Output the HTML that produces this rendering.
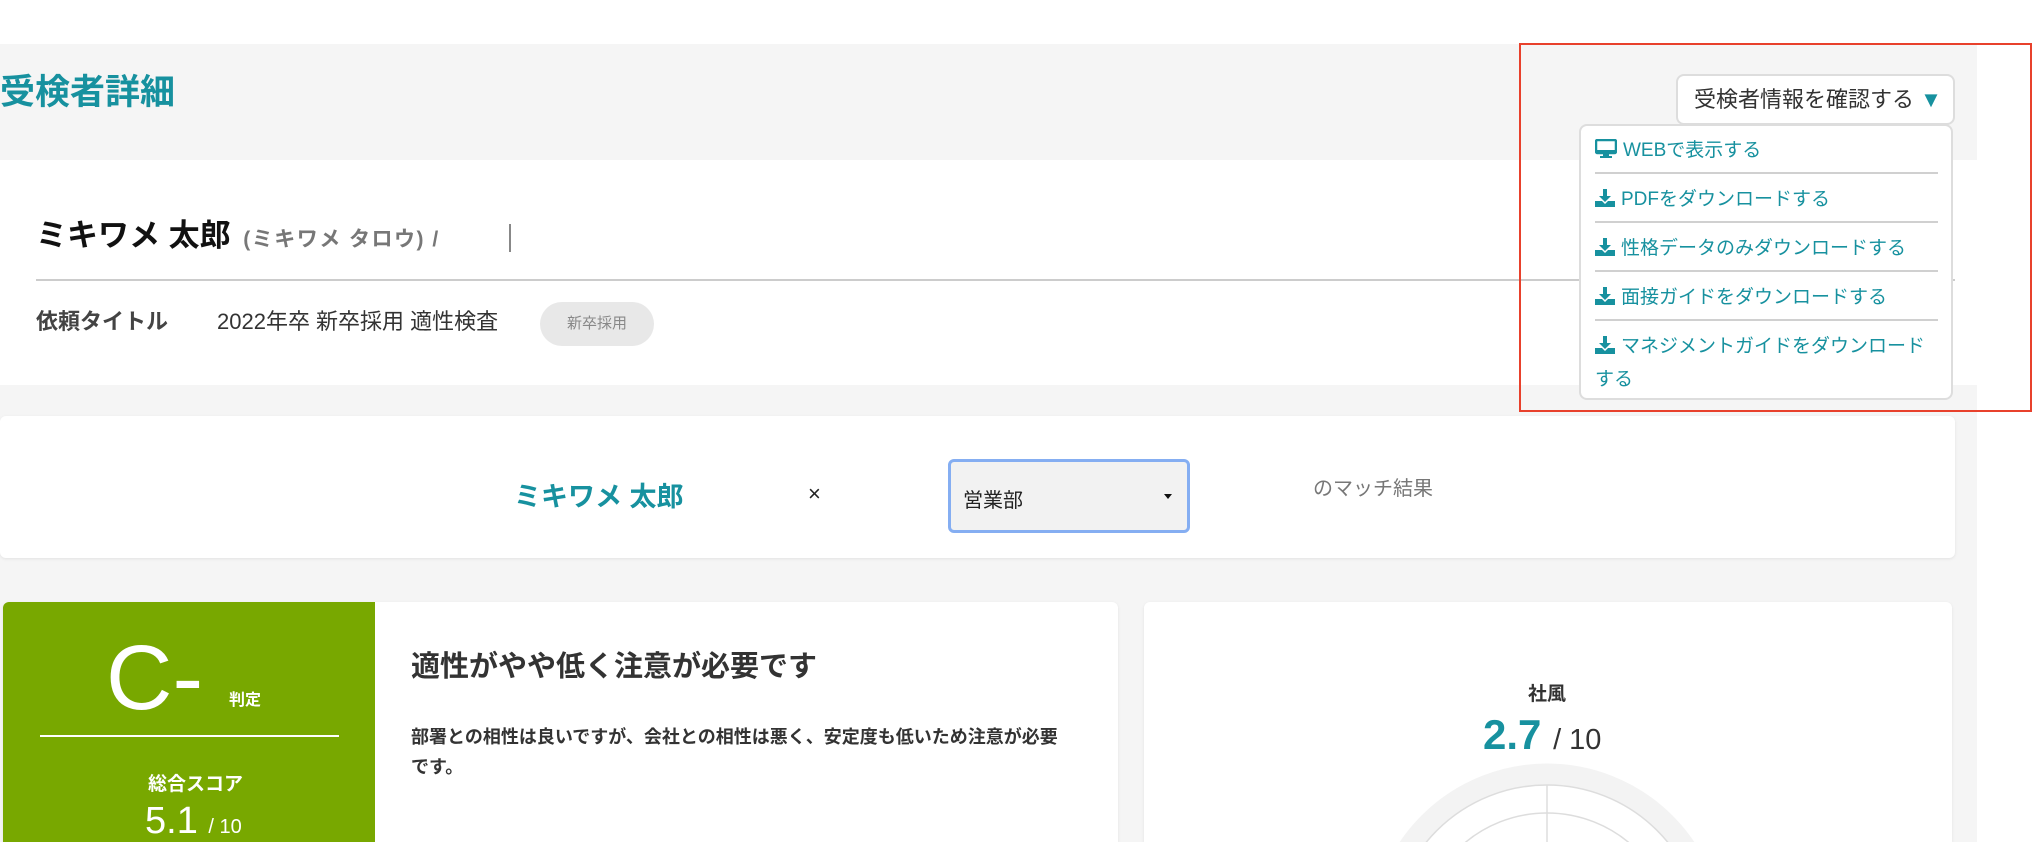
<!DOCTYPE html>
<html><head><meta charset="utf-8"><style>
*{box-sizing:border-box;margin:0;padding:0}
html,body{width:2034px;height:842px;overflow:hidden}
body{background:#fff;font-family:"Liberation Sans","Noto Sans CJK JP",sans-serif;position:relative}
#w{position:absolute;left:0;top:0;width:2034px;height:842px;overflow:hidden}
.abs{position:absolute}
.teal{color:#17919f}
.dd a{position:absolute;left:14px;color:#17919f;font-size:19px;white-space:nowrap;display:flex;align-items:center}
.sep{position:absolute;left:14px;width:343px;height:2px;background:#d0d0d0}
.ic{display:inline-block;margin-right:6px}
</style></head><body><div id="w">
<div class="abs" style="left:0;top:44px;width:1977px;height:798px;background:#f5f5f5"></div>
<div class="abs teal" style="left:0;top:70px;font-size:35px;font-weight:bold;line-height:46px">受検者詳細</div>
<div class="abs" style="left:0;top:160px;width:1977px;height:225px;background:#fff"></div>
<div class="abs" style="left:36px;top:217px;font-size:31px;font-weight:bold;color:#111;line-height:38px;white-space:nowrap">ミキワメ 太郎 <span style="font-size:21px;color:#777;font-weight:bold;letter-spacing:1.5px;margin-left:4px">(ミキワメ タロウ) / </span></div>
<div class="abs" style="left:509px;top:224px;width:2px;height:28px;background:#888"></div>
<div class="abs" style="left:36px;top:279px;width:1919px;height:2px;background:#ccc"></div>
<div class="abs" style="left:36px;top:307px;font-size:22px;font-weight:bold;color:#444;line-height:30px">依頼タイトル</div>
<div class="abs" style="left:217px;top:307px;font-size:22px;color:#333;line-height:30px">2022年卒 新卒採用 適性検査</div>
<div class="abs" style="left:540px;top:302px;width:114px;height:44px;border-radius:22px;background:#e8e8e8;color:#888;font-size:15px;text-align:center;line-height:44px">新卒採用</div>

<div class="abs" style="left:0;top:416px;width:1955px;height:142px;background:#fff;border-radius:6px;box-shadow:0 1px 3px rgba(0,0,0,.08)"></div>
<div class="abs teal" style="left:514px;top:475px;font-size:27px;font-weight:bold">ミキワメ 太郎</div>
<div class="abs" style="left:808px;top:481px;font-size:22px;color:#222">×</div>
<div class="abs" style="left:948px;top:459px;width:242px;height:74px;border:3px solid #85aef2;border-radius:6px;background:#f2f2f2"></div>
<div class="abs" style="left:963px;top:484px;font-size:20px;color:#222">営業部</div>
<div class="abs" style="left:1164px;top:494px;width:0;height:0;border-left:4px solid transparent;border-right:4px solid transparent;border-top:5px solid #111"></div>
<div class="abs" style="left:1313px;top:472px;font-size:20px;color:#777">のマッチ結果</div>

<div class="abs" style="left:3px;top:602px;width:1115px;height:240px;background:#fff;border-radius:6px 6px 0 0;box-shadow:0 1px 3px rgba(0,0,0,.08);overflow:hidden">
 <div class="abs" style="left:0;top:0;width:372px;height:240px;background:#78a800"></div>
</div>
<div class="abs" style="left:106px;top:628px;font-size:92px;color:#fff;line-height:100px">C-</div>
<div class="abs" style="left:229px;top:686px;font-size:16px;color:#fff;font-weight:bold">判定</div>
<div class="abs" style="left:40px;top:735px;width:299px;height:2px;background:#fff"></div>
<div class="abs" style="left:148px;top:769px;font-size:19px;color:#fff;font-weight:bold">総合スコア</div>
<div class="abs" style="left:145px;top:800px;font-size:38px;color:#fff;line-height:42px;white-space:nowrap">5.1 <span style="font-size:20px">/ 10</span></div>
<div class="abs" style="left:411px;top:643px;font-size:29px;font-weight:bold;color:#333">適性がやや低く注意が必要です</div>
<div class="abs" style="left:411px;top:722px;font-size:18px;font-weight:bold;color:#333;line-height:30px;white-space:nowrap">部署との相性は良いですが、会社との相性は悪く、安定度も低いため注意が必要<br>です。</div>

<div class="abs" style="left:1144px;top:602px;width:808px;height:240px;background:#fff;border-radius:6px 6px 0 0;box-shadow:0 1px 3px rgba(0,0,0,.08)"></div>
<div class="abs" style="left:1528px;top:679px;font-size:19px;font-weight:bold;color:#333">社風</div>
<div class="abs" style="left:1483px;top:711px;font-size:42px;font-weight:bold;color:#17919f;line-height:48px;white-space:nowrap">2.7 <span style="font-size:29px;color:#333;font-weight:normal">/ 10</span></div>
<svg class="abs" style="left:1144px;top:740px" width="808" height="102">
 <circle cx="403" cy="201" r="167" fill="none" stroke="#f3f3f3" stroke-width="21"/>
 <circle cx="403" cy="201" r="156" fill="none" stroke="#ddd" stroke-width="1.5"/>
 <circle cx="403" cy="201" r="128" fill="none" stroke="#ddd" stroke-width="1.5"/>
 <line x1="403" y1="45" x2="403" y2="102" stroke="#ddd" stroke-width="1.5"/>
</svg>

<div class="abs" style="left:1676px;top:74px;width:279px;height:51px;background:#fff;border:2px solid #ddd;border-radius:8px;font-size:22px;color:#333;line-height:47px;padding-left:16px;white-space:nowrap">受検者情報を確認する <span style="color:#17919f;font-size:22px">▼</span></div>
<div class="abs dd" style="left:1579px;top:124px;width:374px;height:276px;background:#fff;border:2px solid #ddd;border-radius:8px">
 <a style="top:9px"><svg class="ic" width="22" height="20" viewBox="0 0 22 20"><rect x="1" y="1" width="20" height="13" rx="1.5" fill="none" stroke="#17919f" stroke-width="2.5"/><rect x="1" y="11" width="20" height="3" fill="#17919f"/><rect x="8" y="14" width="6" height="4" fill="#17919f"/><rect x="5" y="17" width="12" height="2" fill="#17919f"/></svg>WEBで表示する</a>
 <div class="sep" style="top:46px"></div>
 <a style="top:58px"><svg class="ic" width="20" height="18" viewBox="0 0 20 18"><rect x="8" y="0" width="4" height="8" fill="#17919f"/><path d="M4 7h12l-6 6z" fill="#17919f"/><path d="M0 12h7l3 3 3-3h7v6H0z" fill="#17919f"/></svg>PDFをダウンロードする</a>
 <div class="sep" style="top:95px"></div>
 <a style="top:107px"><svg class="ic" width="20" height="18" viewBox="0 0 20 18"><rect x="8" y="0" width="4" height="8" fill="#17919f"/><path d="M4 7h12l-6 6z" fill="#17919f"/><path d="M0 12h7l3 3 3-3h7v6H0z" fill="#17919f"/></svg>性格データのみダウンロードする</a>
 <div class="sep" style="top:144px"></div>
 <a style="top:156px"><svg class="ic" width="20" height="18" viewBox="0 0 20 18"><rect x="8" y="0" width="4" height="8" fill="#17919f"/><path d="M4 7h12l-6 6z" fill="#17919f"/><path d="M0 12h7l3 3 3-3h7v6H0z" fill="#17919f"/></svg>面接ガイドをダウンロードする</a>
 <div class="sep" style="top:193px"></div>
 <a style="top:205px"><svg class="ic" width="20" height="18" viewBox="0 0 20 18"><rect x="8" y="0" width="4" height="8" fill="#17919f"/><path d="M4 7h12l-6 6z" fill="#17919f"/><path d="M0 12h7l3 3 3-3h7v6H0z" fill="#17919f"/></svg>マネジメントガイドをダウンロード</a>
 <a style="top:238px">する</a>
</div>
<div class="abs" style="left:1519px;top:43px;width:513px;height:369px;border:2px solid #e8412c"></div>
</div></body></html>
